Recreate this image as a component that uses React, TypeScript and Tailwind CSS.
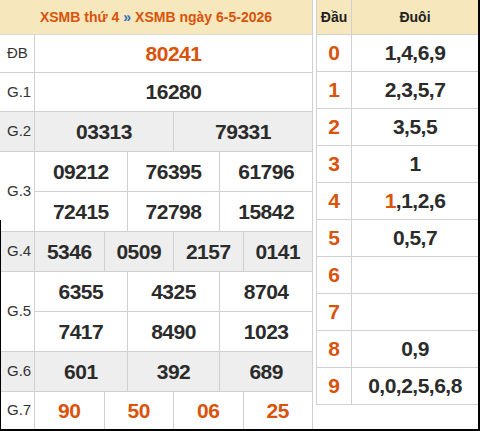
import React from "react";

const F = { fontFamily: '"Liberation Sans", Arial, sans-serif' };

function Label({ text }: { text: string }) {
  return (
    <div className="w-[35px] shrink-0 border-r border-[#d0d0d0] flex items-center pl-[7px] text-[15px] text-[#333]">
      {text}
    </div>
  );
}

function Cells({ items, red = false }: { items: string[]; red?: boolean }) {
  return (
    <div className="flex-1 flex">
      {items.map((t, i) => (
        <div
          key={i}
          className={
            "flex-1 flex items-center justify-center font-bold text-[21px] tracking-[-0.5px] " +
            (red ? "text-[#d9530a] " : "text-[#2b2b2b] ") +
            (i < items.length - 1 ? "border-r border-[#d0d0d0]" : "")
          }
        >
          {t}
        </div>
      ))}
    </div>
  );
}

function Row({
  label,
  lines,
  h,
  gray = false,
  red = false,
  last = false,
}: {
  label: string;
  lines: string[][];
  h: string;
  gray?: boolean;
  red?: boolean;
  last?: boolean;
}) {
  return (
    <div className={"flex " + h + " " + (gray ? "bg-[#eeeeee] " : "") + (last ? "" : "border-b border-[#d0d0d0]")}>
      <Label text={label} />
      <div className="flex-1 flex flex-col">
        {lines.map((l, i) => (
          <div key={i} className={"flex-1 flex " + (i < lines.length - 1 ? "border-b border-[#d0d0d0]" : "")}>
            <Cells items={l} red={red} />
          </div>
        ))}
      </div>
    </div>
  );
}

const loto: [string, React.ReactNode][] = [
  ["0", "1,4,6,9"],
  ["1", "2,3,5,7"],
  ["2", "3,5,5"],
  ["3", "1"],
  ["4", <><span className="text-[#d9530a]">1</span>,1,2,6</>],
  ["5", "0,5,7"],
  ["6", ""],
  ["7", ""],
  ["8", "0,9"],
  ["9", "0,0,2,5,6,8"],
];

export default function App() {
  return (
    <div className="relative w-[480px] h-[431px] bg-white overflow-hidden" style={F}>
      <div className="flex h-[429px] w-[478px] gap-[3px]">
        {/* left table */}
        <div className="w-[313px] flex flex-col border-r border-[#d0d0d0]">
          <div className="h-[35px] bg-[#f7e7bc] border-b border-[#d9d9d9] flex items-center justify-center font-bold text-[14px] text-[#d9530a]">
            XSMB thứ 4 <span className="text-[#2a6ebb] mx-[4px]">»</span> XSMB ngày 6-5-2026
          </div>
          <Row label="ĐB" lines={[["80241"]]} h="h-[38px]" red />
          <Row label="G.1" lines={[["16280"]]} h="h-[39px]" />
          <Row label="G.2" lines={[["03313", "79331"]]} h="h-[40px]" gray />
          <Row label="G.3" lines={[["09212", "76395", "61796"], ["72415", "72798", "15842"]]} h="h-[80px]" />
          <Row label="G.4" lines={[["5346", "0509", "2157", "0141"]]} h="h-[40px]" gray />
          <Row label="G.5" lines={[["6355", "4325", "8704"], ["7417", "8490", "1023"]]} h="h-[80px]" />
          <Row label="G.6" lines={[["601", "392", "689"]]} h="h-[40px]" gray />
          <Row label="G.7" lines={[["90", "50", "06", "25"]]} h="flex-1" red last />
        </div>
        {/* right table */}
        <div className="flex-1 flex flex-col">
          <div className="border-l border-[#d0d0d0] flex flex-col">
            <div className="flex h-[35px] bg-[#f7e7bc] border-b border-[#d0d0d0] font-bold text-[14px] text-[#222]">
              <div className="w-[35px] border-r border-[#d0d0d0] flex items-center justify-center">Đầu</div>
              <div className="flex-1 flex items-center justify-center">Đuôi</div>
            </div>
            {loto.map(([d, v]) => (
              <div key={d} className="flex h-[37px] border-b border-[#d0d0d0] font-bold text-[21px]">
                <div className="w-[35px] border-r border-[#d0d0d0] flex items-center justify-center text-[#d9530a]">{d}</div>
                <div className="flex-1 flex items-center justify-center text-[#2b2b2b] tracking-[-0.5px]">{v}</div>
              </div>
            ))}
          </div>
        </div>
      </div>
      {/* outer black frame edges */}
      <div className="absolute right-0 top-0 w-[2px] h-full bg-black" />
      <div className="absolute left-0 bottom-0 h-[2px] w-full bg-black" />
      <div className="absolute left-0 top-[220px] bottom-0 w-[1px] bg-black" />
    </div>
  );
}
